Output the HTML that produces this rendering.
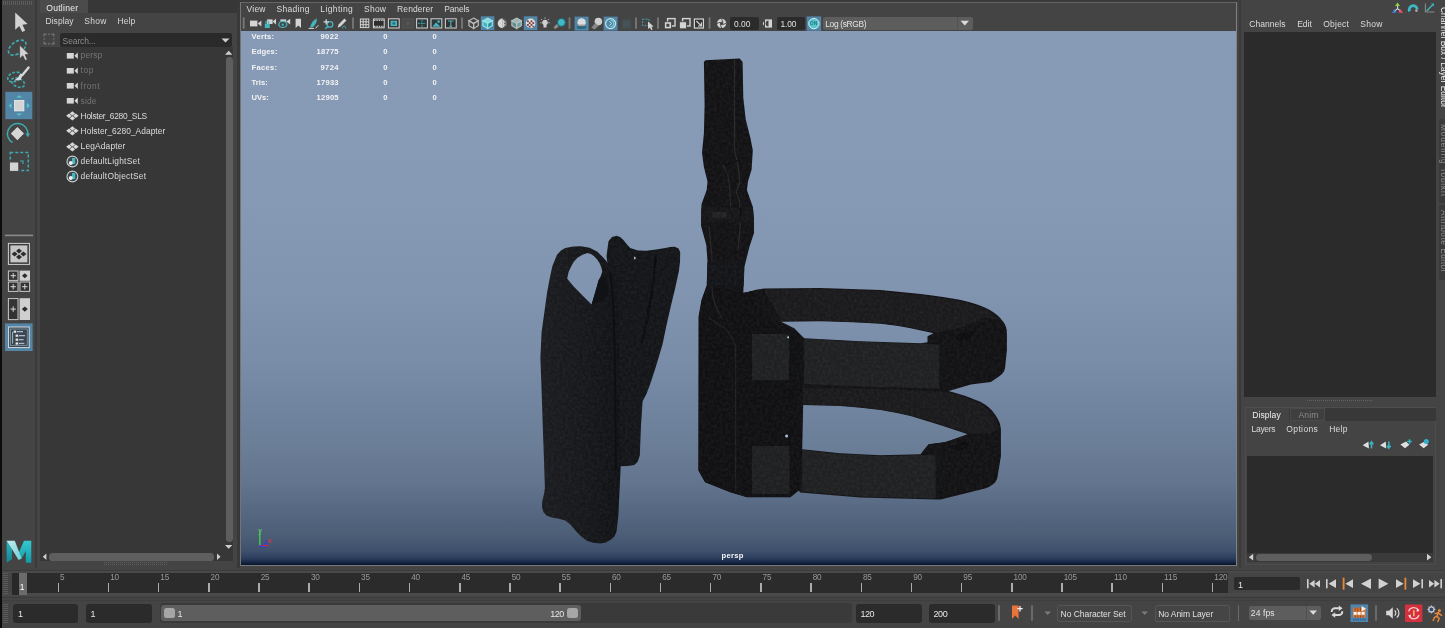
<!DOCTYPE html>
<html>
<head>
<meta charset="utf-8">
<title>Maya</title>
<style>
html,body{margin:0;padding:0;}
body{width:1445px;height:628px;overflow:hidden;background:#444444;position:relative;
 font-family:"Liberation Sans",sans-serif;font-size:9px;color:#d6d6d6;}
#root{position:absolute;left:0;top:0;width:1445px;height:628px;will-change:transform;}
.a{position:absolute;}
.t{position:absolute;white-space:nowrap;line-height:10px;}
svg{position:absolute;overflow:visible;}
.tk{position:absolute;width:1.5px;height:9.8px;top:582.7px;background:#acacac;}
</style>
</head>
<body>
<div id="root">
<div class="a" style="left:0px;top:0px;width:2px;height:628px;background:#0c0c0c;"></div>
<div class="a" style="left:35.4px;top:0px;width:1.2px;height:568px;background:#3a3a3a;"></div>
<svg style="left:3px;top:1px" width="30" height="5"><g fill="#5c5c5c"><rect x="0" y="0" width="1" height="4"/><rect x="2" y="0" width="1" height="4"/><rect x="4" y="0" width="1" height="4"/><rect x="6" y="0" width="1" height="4"/><rect x="8" y="0" width="1" height="4"/><rect x="10" y="0" width="1" height="4"/><rect x="12" y="0" width="1" height="4"/><rect x="14" y="0" width="1" height="4"/><rect x="16" y="0" width="1" height="4"/><rect x="18" y="0" width="1" height="4"/><rect x="20" y="0" width="1" height="4"/><rect x="22" y="0" width="1" height="4"/><rect x="24" y="0" width="1" height="4"/><rect x="26" y="0" width="1" height="4"/><rect x="28" y="0" width="1" height="4"/></g></svg>
<!-- left toolbar icons -->
<svg style="left:0;top:0" width="40" height="570" viewBox="0 0 40 570">
 <!-- select arrow -->
 <path d="M15.2 12.5 L15.2 29.8 L19.3 26 L22.3 32 L25.2 30.6 L22.4 24.8 L27.6 24 Z" fill="#d2d2d2"/>
 <!-- lasso -->
 <ellipse cx="17.2" cy="47.6" rx="10" ry="5.8" transform="rotate(-36 17.2 47.6)" fill="none" stroke="#3fa9b0" stroke-width="1.7" stroke-dasharray="3.2 1.8"/>
 <path d="M19.6 45 L19.6 58.8 L22.8 55.8 L25.2 60.6 L27.4 59.5 L25.2 54.8 L29 54.2 Z" fill="#d2d2d2" stroke="#444" stroke-width="0.8"/>
 <!-- paint select -->
 <ellipse cx="14.5" cy="77" rx="7" ry="4.5" transform="rotate(-20 14.5 77)" fill="none" stroke="#3fa9b0" stroke-width="1.6" stroke-dasharray="2.8 1.6"/>
 <ellipse cx="18" cy="82.5" rx="7" ry="4.2" transform="rotate(25 18 82.5)" fill="none" stroke="#3fa9b0" stroke-width="1.6" stroke-dasharray="2.8 1.6"/>
 <path d="M28.6 67.6 L22.2 75.2" stroke="#d8d8d8" stroke-width="2.4" stroke-linecap="round"/>
 <path d="M22.6 75 L20.6 80 L14 80.6 L18 77.5 L20.4 73.6 Z" fill="#d8d8d8"/>
 <!-- move (selected) -->
 <rect x="5.3" y="91.8" width="27" height="27.4" fill="#5285a6"/>
 <rect x="14.5" y="100.5" width="9.4" height="10.4" fill="#d4d4d4" stroke="#efefef" stroke-width="0.8"/>
 <path d="M16 97.6 L22.4 97.6 L19.2 95.2 Z" fill="#58c4c4"/>
 <path d="M16 113.4 L22.4 113.4 L19.2 115.8 Z" fill="#58c4c4"/>
 <path d="M11.6 102.8 L11.6 108.6 L8.6 105.7 Z" fill="#58c4c4"/>
 <path d="M26.8 102.8 L26.8 108.6 L29.8 105.7 Z" fill="#58c4c4"/>
 <!-- rotate -->
 <path d="M17.4 127 L24 133.6 L17.4 140.2 L10.8 133.6 Z" fill="#d6d6d6"/>
 <path d="M12.5 142.5 A10.2 10.2 0 1 1 27.8 134.5" fill="none" stroke="#3fa9b0" stroke-width="1.5"/>
 <path d="M25.4 133.6 L30.2 133.6 L27.8 137.2 Z" fill="#3fa9b0"/>
 <!-- scale -->
 <rect x="10.3" y="152.6" width="18" height="18" fill="none" stroke="#3fa9b0" stroke-width="1.5" stroke-dasharray="3 2"/>
 <rect x="9.4" y="162" width="9.4" height="9.4" fill="#d4d4d4" stroke="#444" stroke-width="1"/>
 <path d="M20 161 L23 161 L23 164" fill="none" stroke="#3fa9b0" stroke-width="1.2"/>
 <!-- separator -->
 <rect x="5" y="234.6" width="28" height="1.6" fill="#8a8a8a"/>
 <!-- layout icon 1 -->
 <rect x="8.4" y="243.4" width="21" height="21" fill="#3a3a3a" stroke="#d0d0d0" stroke-width="1"/>
 <rect x="10.4" y="245.4" width="17" height="17" fill="#c6c6c6"/>
 <g fill="#2c2c2c">
  <path d="M19 248.4 L22 251 L19 253.6 L16 251 Z"/>
  <path d="M19 254.4 L22 257 L19 259.6 L16 257 Z"/>
  <path d="M14.6 251.4 L17.6 254 L14.6 256.6 L11.6 254 Z"/>
  <path d="M23.4 251.4 L26.4 254 L23.4 256.6 L20.4 254 Z"/>
 </g>
 <!-- layout icon 2 (four) -->
 <g stroke="#c8c8c8" stroke-width="1" fill="#333">
  <rect x="8.4" y="271" width="9.6" height="9.4"/>
  <rect x="8.4" y="282" width="9.6" height="9.4"/>
  <rect x="20" y="282" width="9.6" height="9.4"/>
 </g>
 <rect x="19.6" y="270.6" width="10.4" height="10.2" fill="#cfcfcf"/>
 <path d="M24.8 273.2 L27.6 275.7 L24.8 278.2 L22 275.7 Z" fill="#2c2c2c"/>
 <g stroke="#d8d8d8" stroke-width="1">
  <path d="M13.2 273 V278.4 M10.5 275.7 H15.9"/>
  <path d="M13.2 284 V289.4 M10.5 286.7 H15.9"/>
  <path d="M24.8 284 V289.4 M22.1 286.7 H27.5"/>
 </g>
 <!-- layout icon 3 -->
 <rect x="8.4" y="298.6" width="9.6" height="21" fill="#333" stroke="#c8c8c8" stroke-width="1"/>
 <rect x="19.6" y="298.2" width="10.4" height="21.8" fill="#cfcfcf"/>
 <path d="M13.2 306.4 V311.8 M10.5 309.1 H15.9" stroke="#d8d8d8" stroke-width="1"/>
 <path d="M24.8 306.4 L27.8 309.1 L24.8 311.8 L21.8 309.1 Z" fill="#2c2c2c"/>
 <!-- layout icon 4 outliner (selected) -->
 <rect x="5" y="323.4" width="27.6" height="27.6" fill="#5285a6"/>
 <rect x="8.6" y="327" width="20.6" height="20.6" fill="#3a4650" stroke="#d4dde4" stroke-width="1"/>
 <rect x="10.6" y="329" width="16.6" height="16.6" fill="none" stroke="#8fa9bb" stroke-width="0.7"/>
 <g fill="#e8e8e8">
  <rect x="13.6" y="330.6" width="2.6" height="2.2"/><rect x="17" y="331" width="6" height="1.3" fill="#a8bccb"/>
  <rect x="15.6" y="334.6" width="2.6" height="2.2"/><rect x="19" y="335" width="6" height="1.3" fill="#a8bccb"/>
  <rect x="15.6" y="338.6" width="2.6" height="2.2"/><rect x="19" y="339" width="4.6" height="1.3" fill="#a8bccb"/>
  <rect x="15.6" y="342.4" width="2.6" height="2.2"/><rect x="19" y="342.8" width="5.4" height="1.3" fill="#a8bccb"/>
 </g>
 <path d="M12.6 332 V343.6" stroke="#c8d4dc" stroke-width="0.8"/>
 <!-- Maya logo -->
 <defs>
  <linearGradient id="mg1" x1="0" y1="0" x2="0" y2="1"><stop offset="0" stop-color="#2ab4be"/><stop offset="1" stop-color="#108894"/></linearGradient><linearGradient id="mg3" x1="0" y1="0" x2="0" y2="1"><stop offset="0" stop-color="#34c8d0"/><stop offset="1" stop-color="#129aa6"/></linearGradient>
  <linearGradient id="mg2" x1="0" y1="0" x2="1" y2="1"><stop offset="0" stop-color="#c4ecee"/><stop offset="1" stop-color="#6fd0d6"/></linearGradient>
 </defs>
 <path d="M6.6 540.8 L6.6 562.8 L11.9 559.2 L11.9 549 Z" fill="url(#mg1)"/>
 <path d="M24 540.8 L31.3 540.8 L31.3 562.8 L25.8 562.8 L25.8 551 L21.4 559 L18.4 553.6 Z" fill="url(#mg3)"/>
 <path d="M6.6 540.8 L14.8 540.8 L21.6 558.6 L18.6 560 L11.9 549 Z" fill="url(#mg2)"/>
</svg>
<!-- OUTLINER -->
<div class="a" style="left:38px;top:0px;width:199px;height:567px;background:#444;"></div>
<div class="a" style="left:88px;top:0px;width:149px;height:13px;background:#373737;"></div>
<div class="a" style="left:40px;top:0px;width:48px;height:13px;background:#4b4b4b;"></div>
<div class="t " style="left:46.20px;top:4px;font-size:8.6px;line-height:9.88px;color:#eeeeee;letter-spacing:0.261px;">Outliner</div>
<div class="t " style="left:45.50px;top:17px;font-size:8.5px;line-height:9.77px;color:#d8d8d8;letter-spacing:0.033px;">Display</div>
<div class="t " style="left:84.30px;top:17px;font-size:8.5px;line-height:9.77px;color:#d8d8d8;letter-spacing:0.235px;">Show</div>
<div class="t " style="left:117.40px;top:17px;font-size:8.5px;line-height:9.77px;color:#d8d8d8;letter-spacing:0.155px;">Help</div>
<svg style="left:43px;top:33px" width="12" height="12"><rect x="1.2" y="1.2" width="9.6" height="9.6" fill="none" stroke="#707070" stroke-width="1.4" stroke-dasharray="4.8 1.6 1.6 1.6" stroke-dashoffset="2.4"/></svg>
<div class="a" style="left:60.4px;top:33.4px;width:171.6px;height:13.4px;background:#2a2a2a;border-radius:2px;"></div>
<div class="t " style="left:62.60px;top:37px;font-size:8.5px;line-height:9.77px;color:#8c8c8c;letter-spacing:-0.113px;">Search...</div>
<svg style="left:221px;top:38px" width="10" height="6"><path d="M0.5 0.5 L8.5 0.5 L4.5 4.6 Z" fill="#cfcfcf"/></svg>
<div class="a" style="left:40.2px;top:47.2px;width:193.1px;height:514px;background:#373737;"></div>
<svg style="left:66px;top:51.7px" width="13" height="8"><rect x="0.8" y="1" width="7" height="5.6" fill="#d6d6d6"/><path d="M8.4 3.8 L11.8 0.6 L11.8 7 Z" fill="#d6d6d6"/></svg>
<div class="t " style="left:80.60px;top:51px;font-size:8.4px;line-height:9.65px;color:#757575;letter-spacing:0.178px;">persp</div>
<svg style="left:66px;top:66.7px" width="13" height="8"><rect x="0.8" y="1" width="7" height="5.6" fill="#d6d6d6"/><path d="M8.4 3.8 L11.8 0.6 L11.8 7 Z" fill="#d6d6d6"/></svg>
<div class="t " style="left:80.60px;top:66px;font-size:8.4px;line-height:9.65px;color:#757575;letter-spacing:0.541px;">top</div>
<svg style="left:66px;top:81.9px" width="13" height="8"><rect x="0.8" y="1" width="7" height="5.6" fill="#d6d6d6"/><path d="M8.4 3.8 L11.8 0.6 L11.8 7 Z" fill="#d6d6d6"/></svg>
<div class="t " style="left:80.60px;top:82px;font-size:8.4px;line-height:9.65px;color:#757575;letter-spacing:0.559px;">front</div>
<svg style="left:66px;top:96.9px" width="13" height="8"><rect x="0.8" y="1" width="7" height="5.6" fill="#d6d6d6"/><path d="M8.4 3.8 L11.8 0.6 L11.8 7 Z" fill="#d6d6d6"/></svg>
<div class="t " style="left:80.60px;top:97px;font-size:8.4px;line-height:9.65px;color:#757575;letter-spacing:0.148px;">side</div>
<svg style="left:66px;top:111.3px" width="13" height="10"><g fill="#d8d8d8"><path d="M6.4 0.2 L9.2 2.4 L6.4 4.6 L3.6 2.4 Z"/><path d="M6.4 5 L9.2 7.2 L6.4 9.4 L3.6 7.2 Z"/><path d="M3 2.6 L5.8 4.8 L3 7 L0.2 4.8 Z"/><path d="M9.8 2.6 L12.6 4.8 L9.8 7 L7 4.8 Z"/></g></svg>
<div class="t " style="left:80.60px;top:112px;font-size:8.4px;line-height:9.65px;color:#dcdcdc;letter-spacing:-0.251px;">Holster_6280_SLS</div>
<svg style="left:66px;top:126.4px" width="13" height="10"><g fill="#d8d8d8"><path d="M6.4 0.2 L9.2 2.4 L6.4 4.6 L3.6 2.4 Z"/><path d="M6.4 5 L9.2 7.2 L6.4 9.4 L3.6 7.2 Z"/><path d="M3 2.6 L5.8 4.8 L3 7 L0.2 4.8 Z"/><path d="M9.8 2.6 L12.6 4.8 L9.8 7 L7 4.8 Z"/></g></svg>
<div class="t " style="left:80.60px;top:127px;font-size:8.4px;line-height:9.65px;color:#dcdcdc;letter-spacing:0.042px;">Holster_6280_Adapter</div>
<svg style="left:66px;top:141.5px" width="13" height="10"><g fill="#d8d8d8"><path d="M6.4 0.2 L9.2 2.4 L6.4 4.6 L3.6 2.4 Z"/><path d="M6.4 5 L9.2 7.2 L6.4 9.4 L3.6 7.2 Z"/><path d="M3 2.6 L5.8 4.8 L3 7 L0.2 4.8 Z"/><path d="M9.8 2.6 L12.6 4.8 L9.8 7 L7 4.8 Z"/></g></svg>
<div class="t " style="left:80.60px;top:142px;font-size:8.4px;line-height:9.65px;color:#dcdcdc;letter-spacing:0.157px;">LegAdapter</div>
<svg style="left:66px;top:155.2px" width="13" height="13"><circle cx="6.4" cy="6.5" r="5.4" fill="#3a4a50" stroke="#cfcfcf" stroke-width="1.1"/><rect x="6" y="3" width="3.2" height="6" fill="#46b8c0"/><circle cx="4.8" cy="8" r="2" fill="#efefef"/></svg>
<div class="t " style="left:80.60px;top:157px;font-size:8.4px;line-height:9.65px;color:#dcdcdc;letter-spacing:0.231px;">defaultLightSet</div>
<svg style="left:66px;top:170.2px" width="13" height="13"><circle cx="6.4" cy="6.5" r="5.4" fill="#3a4a50" stroke="#cfcfcf" stroke-width="1.1"/><rect x="6" y="3" width="3.2" height="6" fill="#46b8c0"/><circle cx="4.8" cy="8" r="2" fill="#efefef"/></svg>
<div class="t " style="left:80.60px;top:172px;font-size:8.4px;line-height:9.65px;color:#dcdcdc;letter-spacing:0.237px;">defaultObjectSet</div>
<svg style="left:224px;top:50px" width="10" height="6"><path d="M1 4.8 L8.4 4.8 L4.7 0.8 Z" fill="#cfcfcf"/></svg>
<div class="a" style="left:225.5px;top:57.3px;width:7.2px;height:484.5px;background:#5e5e5e;border-radius:3.4px;"></div>
<svg style="left:224px;top:541px" width="10" height="10"><path d="M1 4 L8.4 4 L4.7 7.8 Z" fill="#cfcfcf"/></svg>
<svg style="left:42px;top:553px" width="6" height="8"><path d="M4.4 0.6 L4.4 7 L0.8 3.8 Z" fill="#cfcfcf"/></svg>
<div class="a" style="left:49px;top:553.2px;width:165.2px;height:7.4px;background:#5e5e5e;border-radius:3.6px;"></div>
<svg style="left:216px;top:553px" width="6" height="8"><path d="M1 0.6 L1 7 L4.6 3.8 Z" fill="#cfcfcf"/></svg>
<svg style="left:104px;top:562px" width="64" height="4"><g fill="#5e5e5e"><rect x="0" y="0" width="1" height="1"/><rect x="0" y="2" width="1" height="1"/><rect x="2" y="0" width="1" height="1"/><rect x="2" y="2" width="1" height="1"/><rect x="4" y="0" width="1" height="1"/><rect x="4" y="2" width="1" height="1"/><rect x="6" y="0" width="1" height="1"/><rect x="6" y="2" width="1" height="1"/><rect x="8" y="0" width="1" height="1"/><rect x="8" y="2" width="1" height="1"/><rect x="10" y="0" width="1" height="1"/><rect x="10" y="2" width="1" height="1"/><rect x="12" y="0" width="1" height="1"/><rect x="12" y="2" width="1" height="1"/><rect x="14" y="0" width="1" height="1"/><rect x="14" y="2" width="1" height="1"/><rect x="16" y="0" width="1" height="1"/><rect x="16" y="2" width="1" height="1"/><rect x="18" y="0" width="1" height="1"/><rect x="18" y="2" width="1" height="1"/><rect x="20" y="0" width="1" height="1"/><rect x="20" y="2" width="1" height="1"/><rect x="22" y="0" width="1" height="1"/><rect x="22" y="2" width="1" height="1"/><rect x="24" y="0" width="1" height="1"/><rect x="24" y="2" width="1" height="1"/><rect x="26" y="0" width="1" height="1"/><rect x="26" y="2" width="1" height="1"/><rect x="28" y="0" width="1" height="1"/><rect x="28" y="2" width="1" height="1"/><rect x="30" y="0" width="1" height="1"/><rect x="30" y="2" width="1" height="1"/><rect x="32" y="0" width="1" height="1"/><rect x="32" y="2" width="1" height="1"/><rect x="34" y="0" width="1" height="1"/><rect x="34" y="2" width="1" height="1"/><rect x="36" y="0" width="1" height="1"/><rect x="36" y="2" width="1" height="1"/><rect x="38" y="0" width="1" height="1"/><rect x="38" y="2" width="1" height="1"/><rect x="40" y="0" width="1" height="1"/><rect x="40" y="2" width="1" height="1"/><rect x="42" y="0" width="1" height="1"/><rect x="42" y="2" width="1" height="1"/><rect x="44" y="0" width="1" height="1"/><rect x="44" y="2" width="1" height="1"/><rect x="46" y="0" width="1" height="1"/><rect x="46" y="2" width="1" height="1"/><rect x="48" y="0" width="1" height="1"/><rect x="48" y="2" width="1" height="1"/><rect x="50" y="0" width="1" height="1"/><rect x="50" y="2" width="1" height="1"/><rect x="52" y="0" width="1" height="1"/><rect x="52" y="2" width="1" height="1"/><rect x="54" y="0" width="1" height="1"/><rect x="54" y="2" width="1" height="1"/><rect x="56" y="0" width="1" height="1"/><rect x="56" y="2" width="1" height="1"/><rect x="58" y="0" width="1" height="1"/><rect x="58" y="2" width="1" height="1"/><rect x="60" y="0" width="1" height="1"/><rect x="60" y="2" width="1" height="1"/><rect x="62" y="0" width="1" height="1"/><rect x="62" y="2" width="1" height="1"/></g></svg>
<!-- VIEWPORT PANEL -->
<div class="a" style="left:236.6px;top:0px;width:3.6px;height:568px;background:#393939;"></div>
<div class="a" style="left:240px;top:0px;width:998px;height:2px;background:#3a3a3a;"></div>
<div class="a" style="left:1239.4px;top:0px;width:1.6px;height:568px;background:#3a3a3a;"></div>
<div class="a" style="left:240px;top:1.6px;width:996.8px;height:564.6px;background:#444;border:1px solid #666;border-left-color:#747474;border-right-color:#808080;border-bottom-color:#7a7a7a;box-sizing:border-box;"></div>
<div class="t " style="left:246.60px;top:5px;font-size:8.5px;line-height:9.77px;color:#dcdcdc;letter-spacing:0.208px;">View</div>
<div class="t " style="left:276.60px;top:5px;font-size:8.5px;line-height:9.77px;color:#dcdcdc;letter-spacing:0.273px;">Shading</div>
<div class="t " style="left:320.30px;top:5px;font-size:8.5px;line-height:9.77px;color:#dcdcdc;letter-spacing:0.391px;">Lighting</div>
<div class="t " style="left:364.10px;top:5px;font-size:8.5px;line-height:9.77px;color:#dcdcdc;letter-spacing:0.210px;">Show</div>
<div class="t " style="left:397.10px;top:5px;font-size:8.5px;line-height:9.77px;color:#dcdcdc;letter-spacing:0.083px;">Renderer</div>
<div class="t " style="left:444.20px;top:5px;font-size:8.5px;line-height:9.77px;color:#dcdcdc;letter-spacing:-0.131px;">Panels</div>
<div class="a" style="left:241px;top:31px;width:994.8px;height:533.8px;background:linear-gradient(to bottom,#889bb6 0%,#879ab5 30%,#8295b0 48%,#798ca8 62%,#6c7f99 76.7%,#63758f 84.2%,#576982 89.8%,#4c5d76 94.5%,#40516e 97.3%,#2a3d5d 98.8%,#10203c 99.7%,#0a1228 100%);"></div>
<svg style="left:0;top:0" width="1445" height="32" viewBox="0 0 1445 32"><rect x="242.79999999999998" y="17.3" width="1.8" height="11.6" rx="0.9" fill="#787878"/><rect x="352.1" y="17.3" width="1.8" height="11.6" rx="0.9" fill="#787878"/><rect x="461.1" y="17.3" width="1.8" height="11.6" rx="0.9" fill="#787878"/><rect x="568.6" y="17.3" width="1.8" height="11.6" rx="0.9" fill="#787878"/><rect x="635.1" y="17.3" width="1.8" height="11.6" rx="0.9" fill="#787878"/><rect x="657.1" y="17.3" width="1.8" height="11.6" rx="0.9" fill="#787878"/><rect x="708.6" y="17.3" width="1.8" height="11.6" rx="0.9" fill="#787878"/><rect x="250" y="20.6" width="7.4" height="5.8" fill="#d4d4d4"/><path d="M257.8 23.5 L261.4 20.4 L261.4 26.6 Z" fill="#d4d4d4"/><rect x="267" y="19.4" width="5.6" height="4.6" fill="#d4d4d4"/><path d="M272.6 21.6 L276 18.8 L276 24.4 Z" fill="#d4d4d4"/><rect x="264.8" y="23.6" width="5" height="4.4" fill="#46b4bc"/><path d="M265.9 23.6 V22.4 a1.4 1.4 0 0 1 2.8 0 V23.6" fill="none" stroke="#46b4bc" stroke-width="1.1"/><rect x="280.4" y="19.4" width="5.8" height="4.2" fill="#d4d4d4"/><path d="M286.4 21.6 L290.2 18.8 L290.2 24.6 Z" fill="#d4d4d4"/><ellipse cx="282.8" cy="24.4" rx="4" ry="3" fill="#444" stroke="#46b4bc" stroke-width="1.3"/><circle cx="282.8" cy="24.6" r="1.2" fill="#46b4bc"/><path d="M295.6 18.8 H301 V28 L298.3 25.4 L295.6 28 Z" fill="#d4d4d4"/><path d="M310 27.6 C311 23 313 20 316.8 18.4 C317 22 315.4 25.6 311.6 27.6 Z" fill="#46b4bc"/><path d="M308.6 28.4 H314 M315.5 28.4 L318.4 25.2" stroke="#d4d4d4" stroke-width="1" fill="none"/><circle cx="330" cy="24.4" r="2.8" fill="none" stroke="#46b4bc" stroke-width="1.3"/><path d="M328 26.4 L325.2 28.8" stroke="#46b4bc" stroke-width="1.4"/><path d="M326.2 19.2 V24.4 M323.6 21.8 H328.8" stroke="#d4d4d4" stroke-width="1.3"/><path d="M337.6 27.8 L338.6 24.6 L344.4 18.6 L346.4 20.6 L340.6 26.6 Z" fill="#d4d4d4"/><path d="M342.6 28.4 a1.6 1.6 0 1 1 3 0" stroke="#46b4bc" stroke-width="1" fill="none"/><g stroke="#d4d4d4" stroke-width="1" fill="none"><rect x="360.4" y="19" width="8.4" height="8.6"/><path d="M363.2 19 V27.6 M366 19 V27.6 M360.4 21.8 H368.8 M360.4 24.7 H368.8"/></g><rect x="373.4" y="19" width="10.8" height="8.8" fill="#2e2e2e" stroke="#d4d4d4" stroke-width="1"/><path d="M374 20.4 H384 M374 26.4 H384" stroke="#d4d4d4" stroke-width="1.2" stroke-dasharray="1.4 1"/><rect x="388.4" y="18.8" width="10.8" height="9.2" fill="#3a3a3a" stroke="#d4d4d4" stroke-width="1"/><rect x="390.6" y="20.8" width="6.4" height="5.2" fill="#46b4bc"/><circle cx="393.8" cy="23.4" r="1.4" fill="#2a6f78"/><rect x="402.4" y="18.8" width="10.8" height="9.2" fill="#4b4b4b" stroke="#555" stroke-width="1"/><circle cx="407.8" cy="23.4" r="1.6" fill="#5a5a5a"/><rect x="416.6" y="18.8" width="10.8" height="9.2" fill="#2f3a3c" stroke="#d4d4d4" stroke-width="1"/><path d="M418 23.4 H426 M422 20 V27" stroke="#46b4bc" stroke-width="0.9" stroke-dasharray="1.6 1"/><rect x="431" y="18.8" width="10.8" height="9.2" fill="#2f3a3c" stroke="#d4d4d4" stroke-width="1"/><path d="M432.4 26.8 L436 22.4 L438.2 24.6 L440.4 26.8 Z" fill="#46b4bc"/><circle cx="438.6" cy="21.6" r="1.3" fill="#46b4bc"/><rect x="445.4" y="18.8" width="10.8" height="9.2" fill="#333" stroke="#d4d4d4" stroke-width="1"/><path d="M448 21 H453.6 M450.8 21 V26.4 M449.6 26.4 H452" stroke="#46b4bc" stroke-width="1.1"/><path d="M473.6 18.1 L478.28000000000003 20.804000000000002 L473.6 23.5 L468.92 20.804000000000002 Z" fill="none" stroke="#bcbcbc" stroke-width="1.2"/><path d="M468.92 20.804000000000002 L473.6 23.5 L473.6 28.5 L468.92 25.64 Z" fill="none" stroke="#bcbcbc" stroke-width="1.2"/><path d="M478.28000000000003 20.804000000000002 L473.6 23.5 L473.6 28.5 L478.28000000000003 25.64 Z" fill="none" stroke="#bcbcbc" stroke-width="1.2"/><rect x="480.8" y="16.3" width="13.6" height="13.8" fill="#5285a6"/><path d="M487.6 18.1 L492.28000000000003 20.804000000000002 L487.6 23.5 L482.92 20.804000000000002 Z" fill="#7fdfe2" stroke="#9adfe4" stroke-width="1.2"/><path d="M482.92 20.804000000000002 L487.6 23.5 L487.6 28.5 L482.92 25.64 Z" fill="#3fb4bc" stroke="#9adfe4" stroke-width="1.2"/><path d="M492.28000000000003 20.804000000000002 L487.6 23.5 L487.6 28.5 L492.28000000000003 25.64 Z" fill="#2a929c" stroke="#9adfe4" stroke-width="1.2"/><circle cx="502.2" cy="23.4" r="4.8" fill="#6a6a6a"/><path d="M502.6 18.6 a4.8 4.8 0 0 0 0 9.6 Z" fill="#d8d8d8"/><path d="M502.6 20 h1.4 v1.4 h1.4 v1.4 h-1.4 v1.4 h1.4 v1.4 h-1.4 v1.4 h-1.4Z" fill="#d0d0d0"/><path d="M516.6 18.1 L521.28 20.804000000000002 L516.6 23.5 L511.92 20.804000000000002 Z" fill="#9eb4b4" stroke="#b4c0c0" stroke-width="1.2"/><path d="M511.92 20.804000000000002 L516.6 23.5 L516.6 28.5 L511.92 25.64 Z" fill="#5f8a8c" stroke="#b4c0c0" stroke-width="1.2"/><path d="M521.28 20.804000000000002 L516.6 23.5 L516.6 28.5 L521.28 25.64 Z" fill="#74a0a2" stroke="#b4c0c0" stroke-width="1.2"/><rect x="523.8" y="16.3" width="13.6" height="13.8" fill="#5285a6"/><circle cx="530.6" cy="23.4" r="4.8" fill="#e0e0e0"/><g fill="#7a3a3a"><rect x="527" y="20.4" width="1.8" height="1.8"/><rect x="530.6" y="20.4" width="1.8" height="1.8"/><rect x="528.8" y="22.2" width="1.8" height="1.8"/><rect x="532.4" y="22.2" width="1.8" height="1.8"/><rect x="527" y="24" width="1.8" height="1.8"/><rect x="530.6" y="24" width="1.8" height="1.8"/><rect x="528.8" y="25.8" width="1.8" height="1.8"/><rect x="532.4" y="25.8" width="1.4" height="1.4"/></g><path d="M545 19.8 a2.8 2.8 0 0 1 1.5 5.2 v2.6 h-3 v-2.6 a2.8 2.8 0 0 1 1.5 -5.2 Z" fill="#cfcfcf"/><path d="M545 17.4 v1.2 M541.2 19.2 l0.9 0.9 M548.8 19.2 l-0.9 0.9 M540.4 22.8 h1.2 M548.4 22.8 h1.2" stroke="#c4c4c4" stroke-width="1"/><circle cx="561.4" cy="22.4" r="4" fill="#3fb8c8" stroke="#1f5f6c" stroke-width="1"/><path d="M553.4 27.4 L556.8 24 L558.8 26.4 L555.2 29 Z" fill="#8e8e8e"/><rect x="574.6" y="16.6" width="14" height="14" fill="#5285a6"/><circle cx="581.6" cy="22.4" r="4.2" fill="#d9dde0"/><ellipse cx="581.6" cy="27.2" rx="5" ry="1.8" fill="#2c6a82"/><path d="M578 24.6 a4 3 0 0 0 7.2 0 Z" fill="#b09890"/><circle cx="598.4" cy="21.6" r="3.8" fill="#cfcfcf"/><path d="M591.4 27.6 L595.4 23 L598.6 26 L594.4 29.4 Z" fill="#888"/><rect x="603.6" y="16.6" width="14" height="14" fill="#5285a6"/><circle cx="610.6" cy="23.6" r="5" fill="none" stroke="#bfe6ea" stroke-width="1.2"/><path d="M610.6 20.4 a3.2 3.2 0 0 1 0 6.4" fill="none" stroke="#6fd0d6" stroke-width="1.3"/><path d="M609.4 21.6 L611.6 23.6 L609.4 25.6" fill="none" stroke="#bfe6ea" stroke-width="1"/><rect x="621.4" y="18.6" width="10.4" height="10.4" fill="#414b4e"/><rect x="623" y="20.2" width="7.2" height="7.2" fill="#465256"/><rect x="642.6" y="19.2" width="6.4" height="6.4" fill="none" stroke="#46b4bc" stroke-width="0.9" stroke-dasharray="1.8 1.3"/><path d="M648 21.4 L648 29 L649.8 27.4 L651.2 30 L652.6 29.4 L651.4 26.8 L653.6 26.4 Z" fill="#d4d4d4"/><rect x="667.6" y="18.6" width="7.4" height="7.4" fill="none" stroke="#d4d4d4" stroke-width="1.4"/><rect x="664.4" y="21.8" width="7" height="7" fill="#d4d4d4" stroke="#444" stroke-width="0.8"/><rect x="666.4" y="23.8" width="3" height="3" fill="#444"/><rect x="682.6" y="18.6" width="7.4" height="7.4" fill="none" stroke="#d4d4d4" stroke-width="1.4"/><rect x="679.4" y="21.8" width="7" height="7" fill="#d4d4d4" stroke="#444" stroke-width="0.8"/><rect x="694.4" y="19" width="9" height="9" fill="#333" stroke="#d4d4d4" stroke-width="1.2"/><path d="M696.4 21 L701 25.6 M701.4 22.6 V26 H698" stroke="#d4d4d4" stroke-width="1.2" fill="none"/><circle cx="721.6" cy="23.4" r="4.6" fill="#d4d4d4"/><circle cx="721.6" cy="23.4" r="1.6" fill="#444"/><path d="M721.6 18.8 L723 22.4 M726.2 23.4 L722.6 24.6 M721.6 28 L720.4 24.4 M717 23.4 L720.6 22.2" stroke="#444" stroke-width="0.9"/><path d="M765 19.4 H772 V27.6 H765 Z" fill="#d4d4d4"/><path d="M768.5 20.6 a2.9 2.9 0 0 0 0 5.8 Z" fill="#444"/><path d="M764 21.4 a3 3 0 0 0 0 4.4 Z" fill="#d4d4d4"/><rect x="806.6" y="16.4" width="14.6" height="14.4" fill="#5285a6"/><circle cx="813.9" cy="23.6" r="5.2" fill="#58c6cc" stroke="#dff4f6" stroke-width="0.9"/></svg>
<div class="t " style="left:809.8px;top:20.4px;font-size:5px;font-weight:bold;color:#1f7f88;line-height:7px;">ON</div>
<div class="a" style="left:730px;top:17px;width:28.5px;height:13px;background:#2b2b2b;border-radius:2px;"></div>
<div class="t " style="left:733.90px;top:20px;font-size:8.4px;line-height:9.65px;color:#e0e0e0;letter-spacing:0.088px;">0.00</div>
<div class="a" style="left:777px;top:17px;width:27.5px;height:13px;background:#2b2b2b;border-radius:2px;"></div>
<div class="t " style="left:780.40px;top:20px;font-size:8.4px;line-height:9.65px;color:#e0e0e0;letter-spacing:-0.062px;">1.00</div>
<div class="a" style="left:823px;top:17px;width:149.5px;height:13px;background:#5d5d5d;border-radius:2px;"></div>
<div class="a" style="left:957px;top:17px;width:0.8px;height:13px;background:#525252;"></div>
<div class="t " style="left:825.30px;top:20px;font-size:8.4px;line-height:9.65px;color:#e4e4e4;letter-spacing:-0.344px;">Log (sRGB)</div>
<svg style="left:960px;top:20px" width="10" height="7"><path d="M0.6 0.8 L9 0.8 L4.8 5.4 Z" fill="#dadada"/></svg>
<div class="t " style="left:251.60px;top:33px;font-size:7.6px;line-height:8.73px;color:#f4f4f4;letter-spacing:0.246px;font-weight:bold;">Verts:</div>
<div class="t " style="left:320.50px;top:33px;font-size:7.6px;line-height:8.73px;color:#f4f4f4;letter-spacing:0.349px;font-weight:bold;">9022</div>
<div class="t " style="left:383.20px;top:33px;font-size:7.6px;line-height:8.73px;color:#f4f4f4;letter-spacing:0.374px;font-weight:bold;">0</div>
<div class="t " style="left:432.50px;top:33px;font-size:7.6px;line-height:8.73px;color:#f4f4f4;letter-spacing:0.374px;font-weight:bold;">0</div>
<div class="t " style="left:251.60px;top:48px;font-size:7.6px;line-height:8.73px;color:#f4f4f4;letter-spacing:0.111px;font-weight:bold;">Edges:</div>
<div class="t " style="left:316.60px;top:48px;font-size:7.6px;line-height:8.73px;color:#f4f4f4;letter-spacing:0.214px;font-weight:bold;">18775</div>
<div class="t " style="left:383.20px;top:48px;font-size:7.6px;line-height:8.73px;color:#f4f4f4;letter-spacing:0.374px;font-weight:bold;">0</div>
<div class="t " style="left:432.50px;top:48px;font-size:7.6px;line-height:8.73px;color:#f4f4f4;letter-spacing:0.374px;font-weight:bold;">0</div>
<div class="t " style="left:251.60px;top:64px;font-size:7.6px;line-height:8.73px;color:#f4f4f4;letter-spacing:0.254px;font-weight:bold;">Faces:</div>
<div class="t " style="left:320.50px;top:64px;font-size:7.6px;line-height:8.73px;color:#f4f4f4;letter-spacing:0.349px;font-weight:bold;">9724</div>
<div class="t " style="left:383.20px;top:64px;font-size:7.6px;line-height:8.73px;color:#f4f4f4;letter-spacing:0.374px;font-weight:bold;">0</div>
<div class="t " style="left:432.50px;top:64px;font-size:7.6px;line-height:8.73px;color:#f4f4f4;letter-spacing:0.374px;font-weight:bold;">0</div>
<div class="t " style="left:251.60px;top:79px;font-size:7.6px;line-height:8.73px;color:#f4f4f4;letter-spacing:0.050px;font-weight:bold;">Tris:</div>
<div class="t " style="left:316.60px;top:79px;font-size:7.6px;line-height:8.73px;color:#f4f4f4;letter-spacing:0.214px;font-weight:bold;">17933</div>
<div class="t " style="left:383.20px;top:79px;font-size:7.6px;line-height:8.73px;color:#f4f4f4;letter-spacing:0.374px;font-weight:bold;">0</div>
<div class="t " style="left:432.50px;top:79px;font-size:7.6px;line-height:8.73px;color:#f4f4f4;letter-spacing:0.374px;font-weight:bold;">0</div>
<div class="t " style="left:251.60px;top:94px;font-size:7.6px;line-height:8.73px;color:#f4f4f4;letter-spacing:-0.079px;font-weight:bold;">UVs:</div>
<div class="t " style="left:316.60px;top:94px;font-size:7.6px;line-height:8.73px;color:#f4f4f4;letter-spacing:0.214px;font-weight:bold;">12905</div>
<div class="t " style="left:383.20px;top:94px;font-size:7.6px;line-height:8.73px;color:#f4f4f4;letter-spacing:0.374px;font-weight:bold;">0</div>
<div class="t " style="left:432.50px;top:94px;font-size:7.6px;line-height:8.73px;color:#f4f4f4;letter-spacing:0.374px;font-weight:bold;">0</div>
<div class="t " style="left:721.50px;top:552px;font-size:7.6px;line-height:8.73px;color:#f4f4f4;letter-spacing:0.301px;font-weight:bold;">persp</div>
<svg style="left:250px;top:524px" width="30" height="30" viewBox="250 524 30 30"><path d="M259.8 545.4 V533.4" stroke="#3fc850" stroke-width="1.5"/><path d="M259.4 545.8 L268.4 545.4" stroke="#d02a48" stroke-width="1.3"/><path d="M259.6 546 L265.4 546.8" stroke="#3a3ae0" stroke-width="1.3"/></svg>
<div class="t " style="left:258.2px;top:527.6px;font-size:6.4px;font-weight:bold;color:#4fd860;line-height:6px;">y</div>
<div class="t " style="left:268.2px;top:537.6px;font-size:6.4px;font-weight:bold;color:#e83040;line-height:6px;">x</div>
<div class="t " style="left:264.2px;top:540.4px;font-size:6.4px;font-weight:bold;color:#3038e8;line-height:6px;">z</div>
<!-- MODEL -->
<svg style="left:0;top:0" width="1445" height="628" viewBox="0 0 1445 628">
 <defs>
  <linearGradient id="lh" x1="0" y1="0" x2="1" y2="0"><stop offset="0" stop-color="#1b1c20"/><stop offset="0.5" stop-color="#17181b"/><stop offset="1" stop-color="#111215"/></linearGradient>
  <filter id="nz" x="0" y="0" width="100%" height="100%"><feTurbulence type="fractalNoise" baseFrequency="0.35" numOctaves="2" seed="3" result="n"/><feColorMatrix type="matrix" values="0 0 0 0 1  0 0 0 0 1  0 0 0 0 1  0.10 0 0 0 -0.035"/><feComposite in2="SourceGraphic" operator="in"/></filter>
  <clipPath id="lac"><path clip-rule="evenodd" d="M703.9 61.9 L705.5 60.3 L739.7 58.4 L742.6 62 L743.3 97.8 L745.7 119.3 L750.5 138.4 L752.8 150.3 L751.6 169.4 L748 181.4 L746.9 190 L752.8 206.7 L754 220 L754 233 L749.3 247.3 L744.5 266.4 L743.3 292.7
  L748 292.1 Q756 289 764.1 288.5 L820.3 288.1 L880.5 290.1 L920.6 294.1 Q945 297 960.8 300.1 Q978 304 988 309 Q998.5 314.6 1003.4 322 Q1007 327 1006.9 333 L1006.9 350.3 L1005 368.6 Q1004 373.6 998.9 376.4 L990.9 382 L970.8 384.4 L948.7 391
  Q966 395.4 980.8 402 Q990 407 995 414.4 Q1000.4 421.6 1000.9 429 L1000.9 456.3 L997.2 478.6 Q995 485.6 984.8 488.4 L960.8 494.4 L940.7 499.4 L936.7 499.4 L860.4 497.4 L800.2 492.4
  L798.7 490.6 L790.4 497.3 L746.9 497.3 L730.2 492.3 L705 482.3 L698.4 470.6 L698.6 316.6 L701.5 299.9 L706.7 285.5 L707.5 261.6 L706.3 244.9 L701 225.8 L701.5 204.3 L706.7 190 L707.5 181.4 L703.9 167 L702 152.7 L703.9 133.6 L704.6 105 Z
  M781.1 321.8 L820.3 321.2 Q855 322 880.5 323.8 Q898 325.6 910.6 328.2 L933.7 333.2 L927.6 336.2 L927.6 342.2 L920.6 343.3 L860.4 341.2 L804.2 338.2 L800.2 334.2 L794.2 328.2 L786.2 324.2 Z
  M803.2 405.1 L840.3 406.1 Q862 407.6 880.5 410.1 Q897 412.8 910.6 416.1 L940.7 425.2 L967.8 434.2 L950.7 440.2 L944.7 442.2 L928.6 444.2 L923.6 450.3 L920.6 454.3 L880.5 455.3 L840.3 453.3 L802.2 449.3 Z"/></clipPath>
 </defs>
 <!-- back plate (adapter) -->
 <path id="bp" d="M606.5 256 L608.5 241.2 L612 237 L616.6 235.8 L620 237 L623.4 239.9 L627 244.5 L630.2 248 L638 250.5 L646.4 250.7 L656 249.5 L665.4 248 L670 247 L674.8 246.7 L678.5 248.5 L680.2 252 L680 262 L678.9 271 L675 289 L670.8 306.2 L666.5 325 L662.6 344 L658.5 358 L654.5 371 L649.5 386 L646.4 394 L642.6 401.2 L641 425.6 L639.8 455.4 L637.5 462 L634.2 464.9 L628 466 L618 466.2 L612 300 Z" fill="#141518"/>
 <path d="M655.6 258 C653 290 648 318 642 342" fill="none" stroke="#0b0c0e" stroke-width="2.4" stroke-linecap="round"/>
 <use href="#bp" filter="url(#nz)"/>
 <ellipse cx="634.8" cy="258" rx="0.8" ry="1.6" fill="#b8c4d4"/>
 <!-- front holster -->
 <path id="fh" fill-rule="evenodd" fill="url(#lh)" d="M557 254.8 L561 250.6 L565.2 248 L573.3 246.5 L581 246.2 L589.6 247.8 L597 251.6 L603 257.2 L607.5 262.5 L611.2 268.3 L614.5 275 L616.6 281.8 L618 292 L618.4 303.5 L619.6 380 L620.7 466.2 L618.4 515 L616.6 531.2 L614.4 536.4 L611.2 539.6 L606 542.4 L600.4 543.6 L593 542.8 L586.8 540.7 L581 536.2 L576 531.2 L570.4 524.6 L565.2 520.6 L558 518.6 L551.7 517.6 L546.6 515.4 L543.5 512.2 L542 507 L542.2 501.4 L544 494 L544.9 487.9 L544 460 L543.2 439 L541.4 385 L540.4 358 L541.6 332 L544.4 312 L547 293 L549.6 279 L552.4 266 Z
  M567.2 278.7 L568.6 272 L570.8 267.2 L573.6 262 L577.2 258 L582 255 L587.3 253 L591 254 L594.4 256.5 L597.2 259.6 L599.5 263 L601.2 267 L602.3 271.5 L600.8 276 L598.7 280 L595.9 290 L591.6 304.5 L587 300 L583 296 L574.4 287.3 Z"/>
 <use href="#fh" filter="url(#nz)"/>
 <path d="M598.7 280 L595.9 290 L591.6 304.5 L603 301 L607.5 296 L608.5 286 L604 276 Z" fill="#111215"/>
 <path d="M609.5 272 C614 290 615 330 616 470" fill="none" stroke="#0d0e10" stroke-width="1.6"/>
 <!-- leg adapter -->
 <path id="la" fill-rule="evenodd" fill="#121214" d="M703.9 61.9 L705.5 60.3 L739.7 58.4 L742.6 62 L743.3 97.8 L745.7 119.3 L750.5 138.4 L752.8 150.3 L751.6 169.4 L748 181.4 L746.9 190 L752.8 206.7 L754 220 L754 233 L749.3 247.3 L744.5 266.4 L743.3 292.7
  L748 292.1 Q756 289 764.1 288.5 L820.3 288.1 L880.5 290.1 L920.6 294.1 Q945 297 960.8 300.1 Q978 304 988 309 Q998.5 314.6 1003.4 322 Q1007 327 1006.9 333 L1006.9 350.3 L1005 368.6 Q1004 373.6 998.9 376.4 L990.9 382 L970.8 384.4 L948.7 391
  Q966 395.4 980.8 402 Q990 407 995 414.4 Q1000.4 421.6 1000.9 429 L1000.9 456.3 L997.2 478.6 Q995 485.6 984.8 488.4 L960.8 494.4 L940.7 499.4 L936.7 499.4 L860.4 497.4 L800.2 492.4
  L798.7 490.6 L790.4 497.3 L746.9 497.3 L730.2 492.3 L705 482.3 L698.4 470.6 L698.6 316.6 L701.5 299.9 L706.7 285.5 L707.5 261.6 L706.3 244.9 L701 225.8 L701.5 204.3 L706.7 190 L707.5 181.4 L703.9 167 L702 152.7 L703.9 133.6 L704.6 105 Z
  M781.1 321.8 L820.3 321.2 Q855 322 880.5 323.8 Q898 325.6 910.6 328.2 L933.7 333.2 L927.6 336.2 L927.6 342.2 L920.6 343.3 L860.4 341.2 L804.2 338.2 L800.2 334.2 L794.2 328.2 L786.2 324.2 Z
  M803.2 405.1 L840.3 406.1 Q862 407.6 880.5 410.1 Q897 412.8 910.6 416.1 L940.7 425.2 L967.8 434.2 L950.7 440.2 L944.7 442.2 L928.6 444.2 L923.6 450.3 L920.6 454.3 L880.5 455.3 L840.3 453.3 L802.2 449.3 Z"/>
 <g clip-path="url(#lac)">
 <!-- back straps slightly lighter -->
 <path d="M764 289.5 L820 289 L880 291 L920 295 L960 301 L986 309 L1000 319 L1005 328.5 L1000 333 L970 336 L934 332.6 L910.6 327.6 L880.5 323.2 L820.3 320.6 L781 321 Z" fill="#1a1a1c"/>
 <path d="M803 388 L860 388.6 L940 391.6 L960 395 L980 403 L994 415 L999 428 L990 434 L968 433.6 L940.7 424.6 L910.6 415.5 L880.5 409.5 L840.3 405.5 L803.2 404.5 Z" fill="#1a1a1c"/>
 <!-- front straps -->
 <path d="M804.2 338.8 L860.4 341.8 L920.6 343.9 L939.6 344.6 L939.6 388.4 L860 386.6 L804 384 Z" fill="#1f2022"/>
 <path d="M802.2 449.9 L840.3 453.9 L880.5 455.9 L920.6 454.9 L936 455.6 L936 498.6 L860.4 496.6 L802 491.6 Z" fill="#1f2022"/>
 <!-- buckles -->
 <path d="M927.6 336.2 L933.7 333.2 L960 328 L985 318 L1000 320 L1006 330 L1006 350 L1004 369 L992 376 L940 388 L940 344 L927.6 342.2 Z" fill="#121214"/>
 <path d="M923.6 450.3 L928.6 444.2 L950.7 440.2 L967.8 434.2 L990 434 L1000 440 L1000.4 456 L996.4 479.6 L984 487.6 L936.5 498.8 L936.5 455 L920.6 454.3 Z" fill="#121214"/>
 <ellipse cx="965" cy="336" rx="9" ry="4" transform="rotate(-18 965 336)" fill="#0d0d0f"/>
 <ellipse cx="962" cy="446" rx="8" ry="3.6" transform="rotate(-20 962 446)" fill="#0d0d0f"/>
 <path d="M940 344 V388 M992 330 V375" stroke="#121316" stroke-width="1.6"/>
 <path d="M936.5 455 V498 M988 442 V486" stroke="#121316" stroke-width="1.6"/>
 <!-- body plate detail -->
 <path d="M698.6 316.6 L701.5 299.9 L706.7 285.5 L743.3 292.7 L751.6 290.3 L756.9 306.7 L763.6 316.7 L777 323.4 L797 331.8 L802 343.5 L802 433.8 L798.7 490.6 L790.4 497.3 L746.9 497.3 L730.2 492.3 L705 482.3 L698.4 470.6 Z" fill="#101012"/>
 <path d="M752 334 H789 V380.5 H752 Z" fill="#1f2022"/>
 <path d="M752 446 H789.5 V494 H752 Z" fill="#1e1f21"/>
 <path d="M709 318 L727 330 L735.6 345 L735.6 492" fill="none" stroke="#1d1e20" stroke-width="1.3"/>
 <path d="M790.8 336 V432 M752 381 H791" stroke="#0f1012" stroke-width="1.4" fill="none"/>
 <circle cx="787.6" cy="393" r="2.8" fill="none" stroke="#0c0d0f" stroke-width="1.3"/>
 <circle cx="786.6" cy="436" r="3.2" fill="#0e0f11"/>
 <circle cx="786.6" cy="436" r="1.5" fill="#aebdd2"/>
 <rect x="787.4" y="336.4" width="1.6" height="1.8" fill="#c6d2e2"/>
 <g fill="none" stroke="#0d0e10" stroke-width="1.2">
  <circle cx="717" cy="354" r="3.6"/><circle cx="719.5" cy="346.5" r="2.6"/><circle cx="719" cy="378" r="4.2"/>
 </g>
 <!-- top strap detail -->
 <path d="M734.5 60 L734.5 150 C737 160 739.5 170 739.7 182 C738 188 736.6 190 736.6 192 C738 198 739.7 200 739.7 204.5 L740.7 221 L738 250" fill="none" stroke="#262729" stroke-width="1.3"/>
 <path d="M700 207.6 H756 V222 H700 Z" fill="#161618"/>
 <path d="M712 212 H727 V217.6 H712 Z" fill="#222224"/>
 <path d="M721 163 C725 168 728 174 728.6 180 C730 188 730.4 196 730.4 207" fill="none" stroke="#242527" stroke-width="1.2"/>
 <path d="M740.5 207.6 V222" stroke="#0c0c0e" stroke-width="1.4"/>
 <path d="M704 152 C712 164 724 168 738 160" fill="none" stroke="#0e0f11" stroke-width="1.4"/>
 <path d="M706.6 262 H744 V286 L706.8 285 Z" fill="#131417"/>
 <path d="M709 226 C710 240 712 250 712 262 M712 286 C712 296 714 306 722 318" fill="none" stroke="#2c2d30" stroke-width="0.9"/>
 </g>
 <use href="#la" filter="url(#nz)"/>
</svg>
<!-- RIGHT PANEL -->
<div class="a" style="left:1241.5px;top:0px;width:204px;height:568px;background:#444;"></div>
<svg style="left:1390px;top:0" width="48" height="16" viewBox="1390 0 48 16">
 <path d="M1397.6 8.6 V4.4 M1397.6 8.6 L1394 11.6 M1397.6 8.6 L1401.4 11.6" stroke="#d8d8d8" stroke-width="1.1"/>
 <path d="M1395 6 L1397.5 2.4 L1400 6 Z" fill="#8fd04a"/>
 <path d="M1392 13 L1394.4 9 L1396.6 12.6 Z" fill="#4a80e8"/>
 <path d="M1403 13 L1400.6 9 L1398.4 12.6 Z" fill="#e8506a"/>
 <path d="M1409.6 11.4 A4 4 0 1 1 1417.2 9.4" fill="none" stroke="#3fb8c6" stroke-width="2.8"/><circle cx="1416.4" cy="10.6" r="1.3" fill="#b8a8a8"/>
 <path d="M1425.4 3.4 V12 H1434.4" fill="none" stroke="#8a8a8a" stroke-width="1.1"/>
 <path d="M1426.6 11 L1433 4.4" stroke="#3fb0c0" stroke-width="1.5"/>
 <path d="M1431 3.4 H1434 V6.4 Z" fill="#3fb0c0"/>
</svg>
<div class="t " style="left:1249.30px;top:20px;font-size:8.5px;line-height:9.77px;color:#dcdcdc;letter-spacing:0.049px;">Channels</div>
<div class="t " style="left:1297.20px;top:20px;font-size:8.5px;line-height:9.77px;color:#dcdcdc;letter-spacing:0.013px;">Edit</div>
<div class="t " style="left:1323.20px;top:20px;font-size:8.5px;line-height:9.77px;color:#dcdcdc;letter-spacing:0.239px;">Object</div>
<div class="t " style="left:1360.20px;top:20px;font-size:8.5px;line-height:9.77px;color:#dcdcdc;letter-spacing:0.285px;">Show</div>
<div class="a" style="left:1243.9px;top:32.1px;width:192.5px;height:364.8px;background:#2b2b2b;"></div>
<svg style="left:1307px;top:400px" width="66" height="2"><g fill="#626262"><rect x="0" y="0" width="1" height="1"/><rect x="2" y="0" width="1" height="1"/><rect x="4" y="0" width="1" height="1"/><rect x="6" y="0" width="1" height="1"/><rect x="8" y="0" width="1" height="1"/><rect x="10" y="0" width="1" height="1"/><rect x="12" y="0" width="1" height="1"/><rect x="14" y="0" width="1" height="1"/><rect x="16" y="0" width="1" height="1"/><rect x="18" y="0" width="1" height="1"/><rect x="20" y="0" width="1" height="1"/><rect x="22" y="0" width="1" height="1"/><rect x="24" y="0" width="1" height="1"/><rect x="26" y="0" width="1" height="1"/><rect x="28" y="0" width="1" height="1"/><rect x="30" y="0" width="1" height="1"/><rect x="32" y="0" width="1" height="1"/><rect x="34" y="0" width="1" height="1"/><rect x="36" y="0" width="1" height="1"/><rect x="38" y="0" width="1" height="1"/><rect x="40" y="0" width="1" height="1"/><rect x="42" y="0" width="1" height="1"/><rect x="44" y="0" width="1" height="1"/><rect x="46" y="0" width="1" height="1"/><rect x="48" y="0" width="1" height="1"/><rect x="50" y="0" width="1" height="1"/><rect x="52" y="0" width="1" height="1"/><rect x="54" y="0" width="1" height="1"/><rect x="56" y="0" width="1" height="1"/><rect x="58" y="0" width="1" height="1"/><rect x="60" y="0" width="1" height="1"/><rect x="62" y="0" width="1" height="1"/><rect x="64" y="0" width="1" height="1"/></g></svg>
<div class="a" style="left:1245px;top:407px;width:191.4px;height:158px;background:#444;border:1px solid #4d4d4d;box-sizing:border-box;"></div>
<div class="a" style="left:1288.5px;top:407.6px;width:147px;height:13px;background:#383838;"></div>
<div class="a" style="left:1289.5px;top:408.4px;width:35.5px;height:12.4px;background:#3f3f3f;border:1px solid #4a4a4a;box-sizing:border-box;"></div>
<div class="t " style="left:1252.20px;top:411px;font-size:8.5px;line-height:9.77px;color:#f0f0f0;letter-spacing:0.104px;">Display</div>
<div class="t " style="left:1298.60px;top:411px;font-size:8.5px;line-height:9.77px;color:#8a8a8a;letter-spacing:0.109px;">Anim</div>
<div class="t " style="left:1251.60px;top:425px;font-size:8.5px;line-height:9.77px;color:#dcdcdc;letter-spacing:-0.318px;">Layers</div>
<div class="t " style="left:1286.30px;top:425px;font-size:8.5px;line-height:9.77px;color:#dcdcdc;letter-spacing:0.373px;">Options</div>
<div class="t " style="left:1329.20px;top:425px;font-size:8.5px;line-height:9.77px;color:#dcdcdc;letter-spacing:0.280px;">Help</div>
<svg style="left:1360px;top:438px" width="76" height="14" viewBox="1360 438 76 14"><path d="M1362.7 445.2 L1368.5 441.4 L1368.9 448.4 Z" fill="#e0e0e0"/><path d="M1371.5 448.4 V442.4 M1369.7 444.2 L1371.5 441.8 L1373.3 444.2" stroke="#35b4c4" stroke-width="1.5" fill="none"/><path d="M1380 445.2 L1385.8 441.4 L1386.2 448.4 Z" fill="#e0e0e0"/><path d="M1388.8 441.6 V447.6 M1387 445.8 L1388.8 448.2 L1390.6 445.8" stroke="#35b4c4" stroke-width="1.5" fill="none"/><path d="M1400.4 444.6 L1406.0 441.4 L1409.4 444.8 L1405.0 448.2 Z" fill="#e0e0e0"/><path d="M1409.5 439.2 V443.8 M1407.2 441.5 H1411.8000000000002" stroke="#35b4c4" stroke-width="1.5" fill="none"/><path d="M1419.1 444.6 L1424.6999999999998 441.4 L1428.1 444.8 L1423.6999999999998 448.2 Z" fill="#e0e0e0"/><circle cx="1426.3" cy="441.6" r="2.5" fill="#35b0cc"/></svg>
<div class="a" style="left:1246.6px;top:456.2px;width:186.8px;height:96.8px;background:#2b2b2b;"></div>
<div class="a" style="left:1246.6px;top:553px;width:186.8px;height:9.4px;background:#3a3a3a;"></div>
<svg style="left:1247.5px;top:553.4px" width="7" height="9"><path d="M5.2 0.8 L5.2 7.6 L0.8 4.2 Z" fill="#d0d0d0"/></svg>
<div class="a" style="left:1256.4px;top:554px;width:115.6px;height:7.2px;background:#5e5e5e;border-radius:3.6px;"></div>
<svg style="left:1425.5px;top:553.4px" width="7" height="9"><path d="M1 0.8 L1 7.6 L5.4 4.2 Z" fill="#d0d0d0"/></svg>
<div class="a" style="left:1437.4px;top:0px;width:8px;height:568px;background:#444;"></div>
<div class="a" style="left:1439.2px;top:119px;width:6px;height:84px;background:#3a3a3a;"></div>
<div class="a" style="left:1439.2px;top:205px;width:6px;height:75px;background:#3a3a3a;"></div>
<div class="t" style="left:1448.10px;top:7px;font-size:8.4px;line-height:9.65px;letter-spacing:0.024px;color:#eeeeee;transform-origin:0 0;transform:rotate(90deg);">Channel Box / Layer Editor</div>
<div class="t" style="left:1448.10px;top:124px;font-size:8.4px;line-height:9.65px;letter-spacing:0.808px;color:#8a8a8a;transform-origin:0 0;transform:rotate(90deg);">Modeling Toolkit</div>
<div class="t" style="left:1448.10px;top:210px;font-size:8.4px;line-height:9.65px;letter-spacing:0.465px;color:#8a8a8a;transform-origin:0 0;transform:rotate(90deg);">Attribute Editor</div>
<!-- TIME SLIDER -->
<div class="a" style="left:2px;top:569.6px;width:1443px;height:1.2px;background:#3b3b3b;"></div>
<div class="a" style="left:2px;top:571px;width:1443px;height:2px;background:#494949;"></div>
<div class="a" style="left:2px;top:593.2px;width:1443px;height:2.6px;background:#494949;"></div>
<div class="a" style="left:2px;top:596.6px;width:1443px;height:1.2px;background:#3b3b3b;"></div>
<div class="a" style="left:2px;top:599.6px;width:1443px;height:1px;background:#3e3e3e;"></div>
<div class="a" style="left:12.2px;top:573px;width:1215.8px;height:20.2px;background:#2b2b2b;"></div>
<div class="a" style="left:12.2px;top:573px;width:6.7px;height:22px;background:#282828;"></div>
<div class="a" style="left:18.9px;top:573px;width:8.1px;height:22px;background:#6b6b6b;"></div>
<div class="t " style="left:19.80px;top:583px;font-size:8.4px;line-height:9.65px;color:#ffffff;letter-spacing:-1.071px;">1</div>
<svg style="left:3px;top:573px" width="6" height="22"><g fill="#5a5a5a"><rect x="0" y="0" width="5" height="1"/><rect x="0" y="2" width="5" height="1"/><rect x="0" y="4" width="5" height="1"/><rect x="0" y="6" width="5" height="1"/><rect x="0" y="8" width="5" height="1"/><rect x="0" y="10" width="5" height="1"/><rect x="0" y="12" width="5" height="1"/><rect x="0" y="14" width="5" height="1"/><rect x="0" y="16" width="5" height="1"/><rect x="0" y="18" width="5" height="1"/><rect x="0" y="20" width="5" height="1"/></g></svg>
<svg style="left:3px;top:604px" width="6" height="20"><g fill="#5a5a5a"><rect x="0" y="0" width="5" height="1"/><rect x="0" y="2" width="5" height="1"/><rect x="0" y="4" width="5" height="1"/><rect x="0" y="6" width="5" height="1"/><rect x="0" y="8" width="5" height="1"/><rect x="0" y="10" width="5" height="1"/><rect x="0" y="12" width="5" height="1"/><rect x="0" y="14" width="5" height="1"/><rect x="0" y="16" width="5" height="1"/><rect x="0" y="18" width="5" height="1"/></g></svg>
<div class="tk" style="left:57.5px"></div><div class="t " style="left:60.00px;top:573px;font-size:8.2px;line-height:9.42px;color:#9a9a9a;letter-spacing:-0.360px;">5</div>
<div class="tk" style="left:107.7px"></div><div class="t " style="left:110.18px;top:573px;font-size:8.2px;line-height:9.42px;color:#9a9a9a;letter-spacing:-0.210px;">10</div>
<div class="tk" style="left:157.9px"></div><div class="t " style="left:160.37px;top:573px;font-size:8.2px;line-height:9.42px;color:#9a9a9a;letter-spacing:-0.210px;">15</div>
<div class="tk" style="left:208.1px"></div><div class="t " style="left:210.55px;top:573px;font-size:8.2px;line-height:9.42px;color:#9a9a9a;letter-spacing:-0.210px;">20</div>
<div class="tk" style="left:258.2px"></div><div class="t " style="left:260.74px;top:573px;font-size:8.2px;line-height:9.42px;color:#9a9a9a;letter-spacing:-0.210px;">25</div>
<div class="tk" style="left:308.4px"></div><div class="t " style="left:310.92px;top:573px;font-size:8.2px;line-height:9.42px;color:#9a9a9a;letter-spacing:-0.210px;">30</div>
<div class="tk" style="left:358.6px"></div><div class="t " style="left:361.11px;top:573px;font-size:8.2px;line-height:9.42px;color:#9a9a9a;letter-spacing:-0.210px;">35</div>
<div class="tk" style="left:408.8px"></div><div class="t " style="left:411.29px;top:573px;font-size:8.2px;line-height:9.42px;color:#9a9a9a;letter-spacing:-0.210px;">40</div>
<div class="tk" style="left:459.0px"></div><div class="t " style="left:461.48px;top:573px;font-size:8.2px;line-height:9.42px;color:#9a9a9a;letter-spacing:-0.210px;">45</div>
<div class="tk" style="left:509.2px"></div><div class="t " style="left:511.66px;top:573px;font-size:8.2px;line-height:9.42px;color:#9a9a9a;letter-spacing:-0.210px;">50</div>
<div class="tk" style="left:559.3px"></div><div class="t " style="left:561.85px;top:573px;font-size:8.2px;line-height:9.42px;color:#9a9a9a;letter-spacing:-0.210px;">55</div>
<div class="tk" style="left:609.5px"></div><div class="t " style="left:612.03px;top:573px;font-size:8.2px;line-height:9.42px;color:#9a9a9a;letter-spacing:-0.210px;">60</div>
<div class="tk" style="left:659.7px"></div><div class="t " style="left:662.22px;top:573px;font-size:8.2px;line-height:9.42px;color:#9a9a9a;letter-spacing:-0.210px;">65</div>
<div class="tk" style="left:709.9px"></div><div class="t " style="left:712.40px;top:573px;font-size:8.2px;line-height:9.42px;color:#9a9a9a;letter-spacing:-0.210px;">70</div>
<div class="tk" style="left:760.1px"></div><div class="t " style="left:762.59px;top:573px;font-size:8.2px;line-height:9.42px;color:#9a9a9a;letter-spacing:-0.210px;">75</div>
<div class="tk" style="left:810.3px"></div><div class="t " style="left:812.77px;top:573px;font-size:8.2px;line-height:9.42px;color:#9a9a9a;letter-spacing:-0.210px;">80</div>
<div class="tk" style="left:860.5px"></div><div class="t " style="left:862.96px;top:573px;font-size:8.2px;line-height:9.42px;color:#9a9a9a;letter-spacing:-0.210px;">85</div>
<div class="tk" style="left:910.6px"></div><div class="t " style="left:913.14px;top:573px;font-size:8.2px;line-height:9.42px;color:#9a9a9a;letter-spacing:-0.210px;">90</div>
<div class="tk" style="left:960.8px"></div><div class="t " style="left:963.33px;top:573px;font-size:8.2px;line-height:9.42px;color:#9a9a9a;letter-spacing:-0.210px;">95</div>
<div class="tk" style="left:1011.0px"></div><div class="t " style="left:1013.51px;top:573px;font-size:8.2px;line-height:9.42px;color:#9a9a9a;letter-spacing:-0.160px;">100</div>
<div class="tk" style="left:1061.2px"></div><div class="t " style="left:1063.70px;top:573px;font-size:8.2px;line-height:9.42px;color:#9a9a9a;letter-spacing:-0.160px;">105</div>
<div class="tk" style="left:1111.4px"></div><div class="t " style="left:1113.88px;top:573px;font-size:8.2px;line-height:9.42px;color:#9a9a9a;letter-spacing:0.043px;">110</div>
<div class="tk" style="left:1161.6px"></div><div class="t " style="left:1164.07px;top:573px;font-size:8.2px;line-height:9.42px;color:#9a9a9a;letter-spacing:0.043px;">115</div>
<div class="tk" style="left:1211.8px"></div><div class="t " style="left:1214.25px;top:573px;font-size:8.2px;line-height:9.42px;color:#9a9a9a;letter-spacing:-0.160px;">120</div>
<!-- BOTTOM CONTROLS -->
<div class="a" style="left:1234.2px;top:577.2px;width:65.6px;height:13.2px;background:#2b2b2b;border-radius:2px;"></div>
<div class="t " style="left:1238.00px;top:580px;font-size:9px;line-height:10.34px;color:#e6e6e6;letter-spacing:-1.405px;">1</div>
<svg style="left:1300px;top:574px" width="145" height="20" viewBox="1300 574 145 20"><rect x="1307.0" y="579.1" width="1.6" height="9.2" fill="#d2d2d2"/><path d="M1314.6 579.9000000000001 L1314.6 587.5 L1309.4 583.7 Z" fill="#d2d2d2"/><path d="M1320 579.9000000000001 L1320 587.5 L1314.8 583.7 Z" fill="#d2d2d2"/><rect x="1326.0" y="579.1" width="1.6" height="9.2" fill="#d2d2d2"/><path d="M1336 579.3000000000001 L1336 588.1 L1328.6 583.7 Z" fill="#d2d2d2"/><rect x="1342.6999999999998" y="577.7" width="1.8" height="12" fill="#e8883a"/><path d="M1353 579.3000000000001 L1353 588.1 L1345.4 583.7 Z" fill="#d2d2d2"/><path d="M1371 578.5 L1371 588.9000000000001 L1361 583.7 Z" fill="#d2d2d2"/><path d="M1378.6 578.5 L1378.6 588.9000000000001 L1388.4 583.7 Z" fill="#d2d2d2"/><path d="M1396 579.3000000000001 L1396 588.1 L1403.6 583.7 Z" fill="#d2d2d2"/><rect x="1404.5" y="577.7" width="1.8" height="12" fill="#e8883a"/><path d="M1413 579.3000000000001 L1413 588.1 L1420.4 583.7 Z" fill="#d2d2d2"/><rect x="1421.4" y="579.1" width="1.6" height="9.2" fill="#d2d2d2"/><path d="M1429 579.9000000000001 L1429 587.5 L1434.2 583.7 Z" fill="#d2d2d2"/><path d="M1434.4 579.9000000000001 L1434.4 587.5 L1439.6 583.7 Z" fill="#d2d2d2"/><rect x="1440.4" y="579.1" width="1.6" height="9.2" fill="#d2d2d2"/></svg>
<div class="a" style="left:12.7px;top:604px;width:65.8px;height:18.6px;background:#2b2b2b;border-radius:3px;"></div>
<div class="t " style="left:18.00px;top:609px;font-size:9px;line-height:10.34px;color:#e6e6e6;letter-spacing:-1.405px;">1</div>
<div class="a" style="left:85.5px;top:604px;width:66.5px;height:18.6px;background:#2b2b2b;border-radius:3px;"></div>
<div class="t " style="left:90.40px;top:609px;font-size:9px;line-height:10.34px;color:#e6e6e6;letter-spacing:-1.405px;">1</div>
<div class="a" style="left:159.9px;top:603.2px;width:692px;height:19.6px;background:#3a3a3a;border-radius:3px;"></div>
<div class="a" style="left:161px;top:605.1px;width:420px;height:16px;background:#5e5e5e;border-radius:3px;"></div>
<div class="a" style="left:163.7px;top:607.7px;width:11.2px;height:10.3px;background:#a6a6a6;border-radius:2.5px;"></div>
<div class="t " style="left:177.60px;top:609px;font-size:9px;line-height:10.34px;color:#e6e6e6;letter-spacing:-1.405px;">1</div>
<div class="t " style="left:550.20px;top:609px;font-size:9px;line-height:10.34px;color:#e6e6e6;letter-spacing:-0.472px;">120</div>
<div class="a" style="left:566.7px;top:607.7px;width:11.2px;height:10.3px;background:#a6a6a6;border-radius:2.5px;"></div>
<div class="a" style="left:856px;top:604px;width:66px;height:18.6px;background:#2b2b2b;border-radius:3px;"></div>
<div class="t " style="left:860.40px;top:609px;font-size:9px;line-height:10.34px;color:#e6e6e6;letter-spacing:-0.472px;">120</div>
<div class="a" style="left:929px;top:604px;width:65.6px;height:18.6px;background:#2b2b2b;border-radius:3px;"></div>
<div class="t " style="left:933.40px;top:609px;font-size:9px;line-height:10.34px;color:#e6e6e6;letter-spacing:-0.272px;">200</div>
<div class="a" style="left:998.1px;top:605px;width:1.8px;height:15.5px;background:#6a6a6a;border-radius:0.9px;"></div>
<div class="a" style="left:1031.3999999999999px;top:605px;width:1.8px;height:15.5px;background:#6a6a6a;border-radius:0.9px;"></div>
<div class="a" style="left:1237.6999999999998px;top:605px;width:1.8px;height:15.5px;background:#6a6a6a;border-radius:0.9px;"></div>
<div class="a" style="left:1375.1px;top:605px;width:1.8px;height:15.5px;background:#6a6a6a;border-radius:0.9px;"></div>
<svg style="left:1010px;top:603px" width="16" height="18" viewBox="1010 603 16 18"><path d="M1012 605.6 H1018.6 V619 L1015.3 615.4 L1012 619 Z" fill="#e8743a"/><path d="M1020 606 V611.4 M1017.3 608.7 H1022.7" stroke="#f0f0f0" stroke-width="1.3"/></svg>
<svg style="left:1044px;top:610.6px" width="8" height="5"><path d="M0.4 0.4 L7 0.4 L3.7 4 Z" fill="#7c7c7c"/></svg>
<svg style="left:1141px;top:610.6px" width="8" height="5"><path d="M0.4 0.4 L7 0.4 L3.7 4 Z" fill="#7c7c7c"/></svg>
<div class="a" style="left:1056.6px;top:605px;width:75.6px;height:17.2px;background:#454545;border:1px solid #555;box-sizing:border-box;border-radius:2px;"></div>
<div class="t " style="left:1060.60px;top:610px;font-size:8.5px;line-height:9.77px;color:#e0e0e0;letter-spacing:-0.048px;">No Character Set</div>
<div class="a" style="left:1154.6px;top:605px;width:75.6px;height:17.2px;background:#454545;border:1px solid #555;box-sizing:border-box;border-radius:2px;"></div>
<div class="t " style="left:1158.20px;top:610px;font-size:8.5px;line-height:9.77px;color:#e0e0e0;letter-spacing:-0.057px;">No Anim Layer</div>
<div class="a" style="left:1249px;top:605.5px;width:71.5px;height:14.2px;background:#5d5d5d;border-radius:2px;"></div>
<div class="a" style="left:1306px;top:605.5px;width:0.8px;height:14.2px;background:#505050;"></div>
<div class="t " style="left:1250.80px;top:609px;font-size:8.5px;line-height:9.77px;color:#e4e4e4;letter-spacing:0.108px;">24 fps</div>
<svg style="left:1309px;top:609.6px" width="9" height="6"><path d="M0.4 0.6 L8 0.6 L4.2 4.8 Z" fill="#dcdcdc"/></svg>
<svg style="left:1328px;top:602px" width="117" height="24" viewBox="1328 602 117 24">
 <path d="M1339.4 608.2 H1335 a3.3 3.3 0 0 0 -3.3 3.3 v0.4 M1334.6 615 H1339 a3.3 3.3 0 0 0 3.3 -3.3 v-0.4" fill="none" stroke="#dadada" stroke-width="1.9"/>
 <path d="M1338.8 605.4 L1342.6 608.2 L1338.8 611 Z M1335.2 612.2 L1331.4 615 L1335.2 617.8 Z" fill="#dadada"/>
 <rect x="1350.5" y="604.4" width="17.6" height="17.6" fill="#4f86b0"/>
 <rect x="1353" y="607.6" width="12.8" height="10" fill="#d8773a"/>
 <path d="M1355.2 607.6 V611.4 M1357.8 607.6 V611.4 M1360.4 607.6 V611.4 M1355.2 615.4 V617.6 M1357.8 615.4 V617.6 M1360.4 615.4 V617.6 M1363 615.4 V617.6" stroke="#7a3c1a" stroke-width="0.8"/>
 <rect x="1353.6" y="612" width="3" height="2.8" fill="#f4f4f4"/><rect x="1357.6" y="612" width="3" height="2.8" fill="#f4f4f4"/><rect x="1361.6" y="612" width="3" height="2.8" fill="#f4f4f4"/>
 <path d="M1361.6 606 L1366 608.8 L1361.6 611.6 Z" fill="#f0f0f0"/>
 <path d="M1353 619.6 H1366" stroke="#2f5f86" stroke-width="1.6" stroke-dasharray="1.4 0.9"/>
 <path d="M1386.2 610.8 H1389 L1392.8 607.2 V618.8 L1389 615.2 H1386.2 Z" fill="#d8d8d8"/>
 <path d="M1394.6 610.4 a3.4 3.4 0 0 1 0 5.2 M1396.8 608.4 a6 6 0 0 1 0 9.2" fill="none" stroke="#d8d8d8" stroke-width="1.2"/>
 <rect x="1405" y="604.4" width="17.4" height="17.6" rx="1" fill="#d6303e"/>
 <path d="M1408.6 611.4 A5.4 5.4 0 0 1 1418.4 610.2 M1419 615 A5.4 5.4 0 0 1 1409.2 616.2" fill="none" stroke="#f0c8c8" stroke-width="1.3"/>
 <path d="M1417 608.6 L1419.6 610.8 L1416.6 611.8 Z M1410.6 617.8 L1408 615.6 L1411 614.6 Z" fill="#f4e8e8"/>
 <path d="M1413.8 610.2 V616.2" stroke="#e8b870" stroke-width="1.6"/>
 <circle cx="1431.4" cy="609.4" r="2.6" fill="#3c4a68" stroke="#c4ccd8" stroke-width="1.3"/>
 <path d="M1431.4 605.4 v1.3 M1431.4 612.1 v1.3 M1427.4 609.4 h1.3 M1434.1 609.4 h1.3 M1428.6 606.6 l0.9 0.9 M1433.3 611.3 l0.9 0.9 M1434.2 606.6 l-0.9 0.9 M1429.5 611.3 l-0.9 0.9" stroke="#c4ccd8" stroke-width="1"/>
 <circle cx="1439.4" cy="610.4" r="1.5" fill="#e8883a"/>
 <path d="M1438.8 612.2 L1436.8 616 L1439.2 618.4 L1437.8 621.6 M1437.2 616 L1434.4 617.4 L1433.2 620.6 M1438.4 613.2 L1441.6 615.4 M1438.2 612.8 L1435.2 613.6" fill="none" stroke="#e8883a" stroke-width="1.4" stroke-linecap="round"/>
</svg>
</div>
</body>
</html>
